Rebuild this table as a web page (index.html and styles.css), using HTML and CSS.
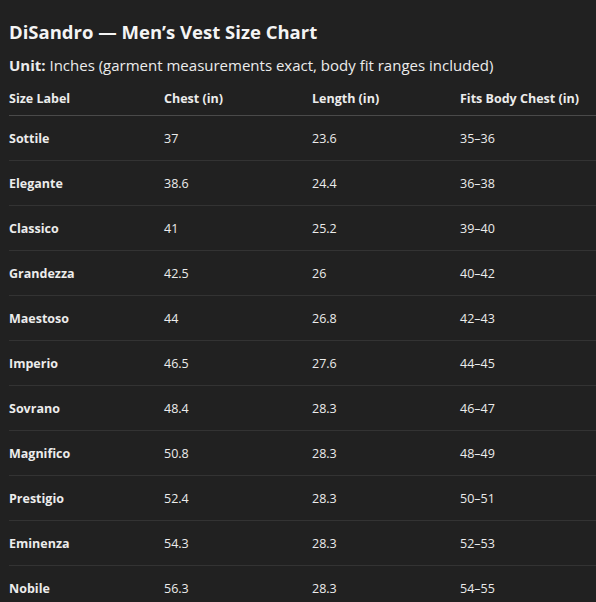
FILE: index.html
```html
<!DOCTYPE html>
<html>
<head>
<meta charset="utf-8">
<link rel="stylesheet" href="styles.css">
</head>
<body>
<div class="page">
  <h2 class="title">DiSandro — Men’s Vest Size Chart</h2>
  <p class="unit"><strong>Unit:</strong> Inches (garment measurements exact, body fit ranges included)</p>
  <table class="chart">
    <thead>
      <tr><th class="c1">Size Label</th><th class="c2">Chest (in)</th><th class="c3">Length (in)</th><th class="c4">Fits Body Chest (in)</th></tr>
    </thead>
    <tbody>
      <tr><td class="lbl">Sottile</td><td>37</td><td>23.6</td><td>35–36</td></tr>
      <tr><td class="lbl">Elegante</td><td>38.6</td><td>24.4</td><td>36–38</td></tr>
      <tr><td class="lbl">Classico</td><td>41</td><td>25.2</td><td>39–40</td></tr>
      <tr><td class="lbl">Grandezza</td><td>42.5</td><td>26</td><td>40–42</td></tr>
      <tr><td class="lbl">Maestoso</td><td>44</td><td>26.8</td><td>42–43</td></tr>
      <tr><td class="lbl">Imperio</td><td>46.5</td><td>27.6</td><td>44–45</td></tr>
      <tr><td class="lbl">Sovrano</td><td>48.4</td><td>28.3</td><td>46–47</td></tr>
      <tr><td class="lbl">Magnifico</td><td>50.8</td><td>28.3</td><td>48–49</td></tr>
      <tr><td class="lbl">Prestigio</td><td>52.4</td><td>28.3</td><td>50–51</td></tr>
      <tr><td class="lbl">Eminenza</td><td>54.3</td><td>28.3</td><td>52–53</td></tr>
      <tr><td class="lbl">Nobile</td><td>56.3</td><td>28.3</td><td>54–55</td></tr>
    </tbody>
  </table>
</div>
</body>
</html>
```
FILE: styles.css
```css
html, body {
  margin: 0;
  padding: 0;
  background: #212121;
}
body {
  color: #ececec;
  font-family: "Open Sans", "Noto Sans", sans-serif;
  overflow: hidden;
}
.page {
  padding: 19px 0 0 9px;
}
.title {
  margin: 0;
  font-size: 18.5px;
  font-weight: 700;
  line-height: 26px;
  color: #f4f4f4;
}
.unit {
  margin: 9px 0 0 0;
  font-size: 15px;
  line-height: 22px;
}
.unit strong {
  font-weight: 700;
}
.chart {
  margin-top: 6px;
  border-collapse: collapse;
  width: 600px;
  table-layout: fixed;
  font-size: 12.5px;
}
.chart th {
  text-align: left;
  font-weight: 700;
  height: 33px;
  padding: 0;
  border-bottom: 1px solid #4a4a4a;
  vertical-align: middle;
}
.chart td {
  height: 44px;
  padding: 0;
  border-bottom: 1px solid #333333;
  vertical-align: middle;
}
.chart td.lbl {
  font-weight: 700;
}
.c1 { width: 155px; }
.c2 { width: 148px; }
.c3 { width: 148px; }
.c4 { width: 149px; }
```
